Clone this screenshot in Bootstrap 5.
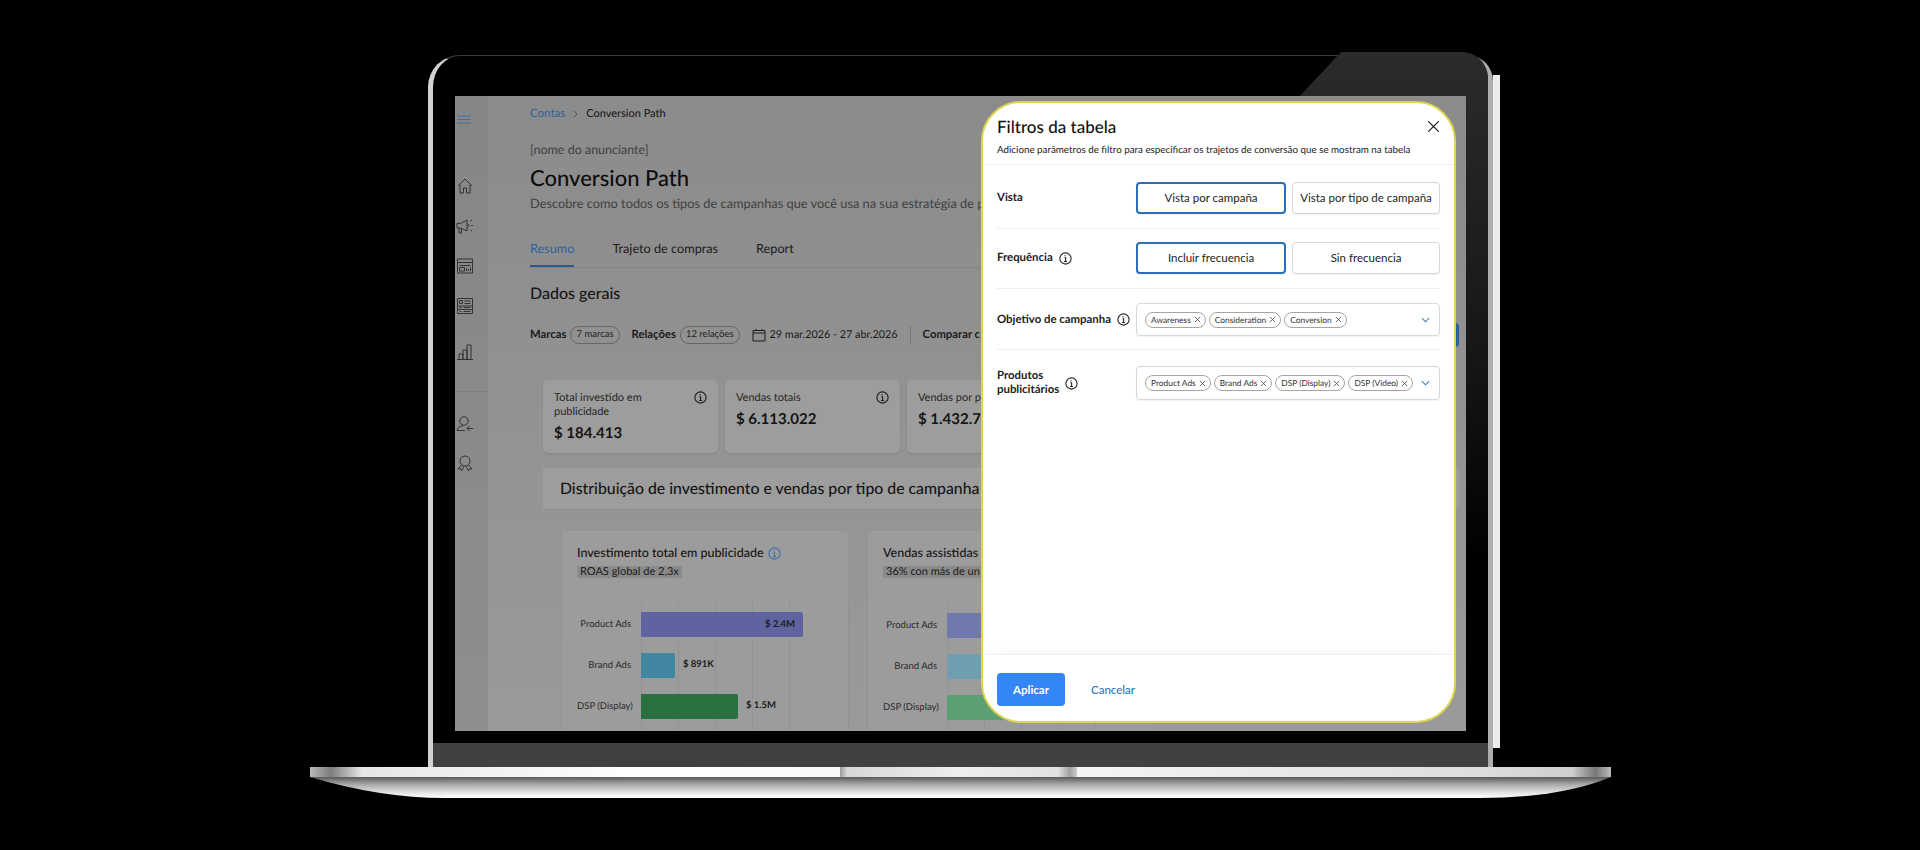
<!DOCTYPE html>
<html lang="pt">
<head>
  <meta charset="UTF-8">
  <title>Conversion Path - Filtros da tabela</title>
  <link href="https://cdn.jsdelivr.net/npm/bootstrap@5.3.0/dist/css/bootstrap.min.css" rel="stylesheet">
  <style>
    body { background: #000; color: #111; font-family: "Lato", "Liberation Sans", sans-serif; text-rendering: geometricPrecision; overflow: hidden; padding-top: 55px; }
    svg { display: block; flex-shrink: 0; fill: none; stroke: currentColor; }

    /* laptop */
    .laptop { width: 1301px; margin-left: 310px; }
    .lid { position: relative; width: 1065px; height: 712px; margin-left: 118px; padding-top: 40px; background: #000; border-top: 1px solid #3a3a3a; border-left: 5px solid #d2d2d2; border-right: 5px solid #aeaeae; border-radius: 32px 26px 0 0; }
    .lid-sheen { position: absolute; top: -4px; left: 866px; right: 0; bottom: 36px; background: linear-gradient(#2b2b2b, #161616 45%, #000 75%); clip-path: polygon(42px 0, 100% 0, 100% 100%, 0 100%, 0 45px); border-top-right-radius: 26px; }
    .lid-strip { position: absolute; top: 19px; right: -12px; bottom: 19px; width: 7px; background: #ececec; }
    .chin { height: 24px; margin-top: 12px; background: #414141; }
    .base-top { position: relative; height: 10px; background: linear-gradient(90deg, #bbb, #7c7c7c 1.6%, #e6e6e6 4%, #fff 25%, #f4f4f4 60%, #dedede 90%, #cfcfcf 97%, #777 98.8%, #bbb); }
    .base-notch { position: absolute; left: 530px; top: 0; width: 237px; height: 12px; background: linear-gradient(90deg, #999, #d8d8d8 3%, #eee 50%, #e2e2e2 92%, #a0a0a0 97%, #ccc); border-radius: 0 0 4px 4px; }
    .base-bottom { height: 21px; background: linear-gradient(#5a5a5a, #a8a8a8 35%, #e4e4e4 75%, #fff); clip-path: path("M0 0 L1301 0 Q1250 21 1170 21 L135 21 Q70 21 0 0 Z"); }

    /* tela */
    .screen { position: relative; height: 635px; margin: 0 22px; background: linear-gradient(#8b8b8b, #9a9a9a); overflow: hidden; }
    .rail { width: 33px; padding-top: 19px; background: linear-gradient(#868686, #8e8e8e); color: #333; }
    .rail-menu { color: #3a6ea8; margin-left: 2px; }
    .rail-group { margin-top: 53px; padding-left: 1px; gap: 22px; }
    .rail-chart { margin-top: 6px; }
    .rail-line { height: 1px; margin-top: 30px; background: #7f7f7f; }
    .rail-group-low { margin-top: 23px; padding-left: 1px; gap: 21px; }
    .main-area { padding: 9px 7px 0 42px; min-width: 0; }
    .main-area > * { flex-shrink: 0; }
    .crumbs { font-size: 11px; line-height: 18px; }
    .crumbs a { font-size: 11.500px; color: #2f5f9c; text-decoration: none; }
    .crumbs svg { color: #555; }
    .advertiser { margin-top: 18px; font-size: 12.5px; line-height: 18px; color: #3f3f3f; }
    .page-title { margin: 4px 0 0; font-size: 22px; line-height: 30px; font-weight: 500; color: #0d0d0d; }
    .page-desc { margin: 1px 0 0; font-size: 12.800px; line-height: 18px; color: #3f3f3f; white-space: nowrap; }
    .tabs-line { margin-top: 24px; border-bottom: 1px solid #858585; gap: 38px; }
    .tabs-line .nav-link { padding: 3px 0 8px; font-size: 12.700px; line-height: 18px; color: #1a1a1a; border-bottom: 2px solid transparent; }
    .tabs-line .nav-link.active { color: #2f5f9c; border-bottom-color: #2d5a94; }
    .block-title { margin: 15px 0 0; font-size: 16px; line-height: 22px; font-weight: 500; color: #161616; }
    .filter-bar { margin-top: 18px; height: 24px; font-size: 11.300px; color: #1a1a1a; white-space: nowrap; }
    .filter-bar b { font-weight: 700; }
    .filter-date { font-size: 10.800px; }
    .mini-pill { height: 18px; padding: 0 5px; line-height: 16px; font-size: 9.500px; font-weight: 400; color: #222; background: transparent; border: 1px solid #666; }
    .gap-after { margin-left: 12px; }
    .bar-split { width: 1px; height: 18px; margin-left: 12px; background: #777; }
    .peek-btn { width: 60px; height: 24px; background: #2b5f9e; border-radius: 4px; }
    .kpi-row { margin: 33px 0 0 13px; gap: 7px; }
    .kpi-box { width: 175px; height: 73px; flex-shrink: 0; padding: 11px; background: #9d9d9d; border: 0; border-radius: 5px; box-shadow: 0 1px 2px rgba(0,0,0,.1); font-size: 11px; line-height: 14px; color: #262626; }
    .kpi-box svg { color: #1a1a1a; }
    .kpi-value { margin-top: 4px; font-size: 15px; line-height: 20px; font-weight: 700; color: #141414; white-space: nowrap; }
    .split-head { margin: 15px 0 0 13px; height: 42px; padding-left: 17px; background: #9d9d9d; border-bottom: 1px solid #8e8e8e; font-size: 15.800px; font-weight: 500; color: #141414; white-space: nowrap; }
    .chart-row { margin: 20px 0 0 31px; gap: 18px; }
    .chart-box { flex-shrink: 0; width: 288px; height: 220px; padding: 13px 0 0 15px; background: #9c9c9c; border: 1px solid #939393; border-radius: 5px; }
    .chart-title { font-size: 12.500px; line-height: 18px; font-weight: 500; color: #141414; white-space: nowrap; }
    .chart-title svg { color: #3a6ea8; }
    .chart-tag { align-self: flex-start; margin-top: 4px; padding: 0 3px; font-size: 11px; line-height: 12px; background: #8a8a8a; color: #1a1a1a; white-space: nowrap; }
    .plot-wrap { margin-top: 23px; }
    .plot-labels { width: 54px; padding-top: 11px; gap: 16px; font-size: 9.500px; color: #2a2a2a; text-align: right; white-space: nowrap; }
    .plot-labels span { height: 25px; line-height: 25px; }
    .plot-bars { width: 149px; margin-left: 10px; padding-top: 11px; gap: 16px; height: 190px; background-image: linear-gradient(90deg, #939393 1px, transparent 1px); background-size: 37px 100%; }
    .plot-line { height: 25px; font-size: 9.500px; font-weight: 700; color: #1a1a1a; white-space: nowrap; }
    .plot-fill { flex-shrink: 0; height: 25px; padding-right: 8px; line-height: 25px; text-align: right; border-radius: 0 2px 2px 0; }
    .fill-a { background: #5f64a0; }
    .fill-b { background: #4287a2; }
    .fill-c { background: #2a7040; }
    .chart-soft .plot-wrap { margin-top: 24px; }
    .chart-soft .fill-a { background: #7079ae; }
    .chart-soft .fill-b { background: #6f9eb3; }
    .chart-soft .fill-c { background: #5c9f72; }

    /* painel de filtros */
    .filter-sheet { position: absolute; left: 526px; top: 5px; width: 475px; height: 622px; background: #fff; border: 2px solid #dcd64f; border-radius: 40px; }
    .sheet-head { padding: 12px 14px 7px; border-bottom: 1px solid #f0f0f0; }
    .sheet-title { margin: 0; font-size: 17px; line-height: 24px; font-weight: 500; color: #111; }
    .sheet-close { padding: 0; margin-top: 5px; background: none; border: 0; color: #111; }
    .sheet-sub { margin: 4px 0 0; font-size: 9.800px; line-height: 14px; color: #222; white-space: nowrap; }
    .sheet-body { padding: 4px 14px 0; }
    .filter-line { padding: 13px 0 14px; border-bottom: 1px solid #efefef; }
    .filter-line:last-child { border-bottom: 0; }
    .filter-line.field-line { padding-top: 14px; padding-bottom: 13px; }
    .filter-line.field-line:last-child { padding-top: 16px; }
    .line-label { width: 139px; flex-shrink: 0; gap: 6px; font-size: 11.400px; line-height: 14px; font-weight: 700; color: #222; white-space: nowrap; }
    .line-label svg { color: #222; }
    .choice-row { gap: 6px; }
    .choice-btn { flex: 1 1 0; height: 32px; padding: 0; font-size: 11.500px; line-height: 30px; color: #222; background: #fff; border: 1px solid #d8d8d8; border-radius: 4px; box-shadow: 0 1px 1px rgba(0,0,0,.06); white-space: nowrap; }
    .choice-btn.picked { border: 2px solid #2f6db5; line-height: 28px; }
    .tag-field { width: 304px; height: 33px; padding: 0 8px; gap: 3px; background: #fff; border: 1px solid #d8d8d8; border-radius: 4px; box-shadow: 0 1px 1px rgba(0,0,0,.06); }
    .tag-field.tall { height: 34px; }
    .tag-chip { height: 16px; padding: 0 4px 0 5px; gap: 3px; font-size: 8.400px; font-weight: 400; line-height: 14px; color: #333; background: #fff; border: 1px solid #a5a5a5; }
    .tag-chip svg { color: #444; }
    .tag-caret { margin-left: auto; margin-right: 1px; color: #3d7bb8; }
    .sheet-foot { margin-top: auto; padding: 18px 14px 15px; border-top: 1px solid #f2f2f2; box-shadow: 0 -8px 10px -8px rgba(0,0,0,.05); gap: 25px; }
    .apply-btn { width: 68px; height: 33px; padding: 0; font-size: 11.500px; font-weight: 700; color: #fff; background: #3485f7; border: 0; border-radius: 4px; }
    .cancel-btn { padding: 0; font-size: 11.500px; font-weight: 500; color: #2e74bd; text-decoration: none; }
  </style>
</head>
<body>
  <svg width="0" height="0" class="position-absolute">
    <symbol id="ic-info" viewBox="0 0 12 12">
      <circle cx="6" cy="6" r="5.2" stroke-width="1"/>
      <path d="M5 3.4h1.1M5 5.3h1.1v3.3M4.6 8.7h2.8" stroke-width="1"/>
    </symbol>
    <symbol id="ic-x" viewBox="0 0 8 8">
      <path d="M1 1l6 6M7 1L1 7" stroke-width=".9"/>
    </symbol>
    <symbol id="ic-caret" viewBox="0 0 10 6">
      <path d="M1 1l4 4 4-4" stroke-width="1.2"/>
    </symbol>
  </svg>

  <div class="laptop">
    <div class="lid">
      <div class="lid-sheen"></div>
      <div class="lid-strip"></div>

      <div class="screen d-flex">
        <aside class="rail d-flex flex-column flex-shrink-0">
          <svg class="rail-menu" width="14" height="9" viewBox="0 0 14 9"><path d="M0 1h14M0 4.5h14M0 8h14" stroke-width="1.2"/></svg>
          <div class="rail-group d-flex flex-column align-items-start">
            <svg width="18" height="18" viewBox="0 0 18 18" stroke-width="1"><path d="M2 9l7-7 7 7M4 7.5V16h3.5v-5h3v5H14V7.5"/></svg>
            <svg width="18" height="18" viewBox="0 0 18 18" stroke-width="1"><path d="M1 6.5h3.500L11 3v11L4.500 11H1zM3 11v5h2.500v-4.500M12 7a2 2 0 0 1 0 3M14.500 4l1.500-1M15 8.500h2M14.500 13l1.500 1"/></svg>
            <svg width="18" height="18" viewBox="0 0 18 18" stroke-width="1"><path d="M1.500 2h15v14h-15zM1.500 5.500h15M3.500 8.500h11M3.500 10.500h5v3.500h-5zM10.500 14v-3M12.500 14v-2M14.500 14v-3.500"/></svg>
            <svg width="18" height="18" viewBox="0 0 18 18" stroke-width="1"><path d="M1.500 1.500h15v15h-15zM1.500 9h15M1.500 12.500h15M3.500 3.500h3v3h-3zM8.500 4h6M8.500 6.500h6M3.500 10.500h2M7.500 10.500h7M3.500 14.500h2M7.500 14.500h7"/></svg>
            <svg class="rail-chart" width="18" height="18" viewBox="0 0 18 18" stroke-width="1"><path d="M1 16.500h16M3 16.500V11h4v5.500M7 16.500V7h4v9.500M11 16.500V2h4v14.500"/></svg>
          </div>
          <div class="rail-line"></div>
          <div class="rail-group-low d-flex flex-column align-items-start">
            <svg width="18" height="18" viewBox="0 0 18 18" stroke-width="1"><circle cx="8" cy="6" r="4.200"/><path d="M1 15.500c.5-3 2.500-4.500 6-4.500M9 15.500H1M17 13.500h-6M13.500 11L11 13.500l2.500 2.500"/></svg>
            <svg width="18" height="18" viewBox="0 0 18 18" stroke-width="1"><circle cx="9" cy="7" r="5"/><path d="M5.500 11L2 15l2.500-.3L5.500 17l2.500-4.700M12.500 11l3.500 4-2.500-.3-1 2.300-2.500-4.700"/></svg>
          </div>
        </aside>

        <main class="main-area flex-grow-1 d-flex flex-column">
          <div class="crumbs d-flex align-items-center gap-2">
            <a href="#">Contas</a>
            <svg width="5" height="8" viewBox="0 0 5 8"><path d="M1 1l3 3-3 3" stroke-width="1"/></svg>
            <span>Conversion Path</span>
          </div>
          <div class="advertiser">[nome do anunciante]</div>
          <h1 class="page-title">Conversion Path</h1>
          <p class="page-desc">Descobre como todos os tipos de campanhas que você usa na sua estratégia de pu</p>

          <ul class="nav tabs-line">
            <li class="nav-item"><a class="nav-link active" href="#">Resumo</a></li>
            <li class="nav-item"><a class="nav-link" href="#">Trajeto de compras</a></li>
            <li class="nav-item"><a class="nav-link" href="#">Report</a></li>
          </ul>

          <h2 class="block-title">Dados gerais</h2>

          <div class="filter-bar d-flex align-items-center">
            <b>Marcas</b>
            <span class="badge rounded-pill mini-pill ms-1">7 marcas</span>
            <b class="gap-after">Relações</b>
            <span class="badge rounded-pill mini-pill ms-1">12 relações</span>
            <svg class="gap-after" width="14" height="14" viewBox="0 0 14 14" stroke-width="1"><path d="M1 2.500h12v10.500H1zM1 5h12M4 1v2M10 1v2"/></svg>
            <span class="filter-date ms-1">29 mar.2026 - 27 abr.2026</span>
            <span class="bar-split"></span>
            <b class="gap-after">Comparar c</b>
            <span class="peek-btn ms-auto"></span>
          </div>

          <div class="kpi-row d-flex">
            <div class="card kpi-box">
              <div class="d-flex justify-content-between gap-2">
                <span>Total investido em<br>publicidade</span>
                <svg width="13" height="13"><use href="#ic-info"/></svg>
              </div>
              <div class="kpi-value">$ 184.413</div>
            </div>
            <div class="card kpi-box">
              <div class="d-flex justify-content-between gap-2">
                <span>Vendas totais</span>
                <svg width="13" height="13"><use href="#ic-info"/></svg>
              </div>
              <div class="kpi-value">$ 6.113.022</div>
            </div>
            <div class="card kpi-box">
              <div>Vendas por p</div>
              <div class="kpi-value">$ 1.432.7</div>
            </div>
          </div>

          <div class="split-head d-flex align-items-center">Distribuição de investimento e vendas por tipo de campanha</div>

          <div class="chart-row d-flex">
            <div class="card chart-box">
              <div class="chart-title d-flex align-items-center gap-1">Investimento total em publicidade <svg width="13" height="13"><use href="#ic-info"/></svg></div>
              <div class="chart-tag">ROAS global de 2,3x</div>
              <div class="plot-wrap d-flex">
                <div class="plot-labels d-flex flex-column"><span>Product Ads</span><span>Brand Ads</span><span>DSP (Display)</span></div>
                <div class="plot-bars d-flex flex-column">
                  <div class="plot-line d-flex align-items-center"><div class="plot-fill fill-a" style="width:162px">$ 2.4M</div></div>
                  <div class="plot-line d-flex align-items-center gap-2"><div class="plot-fill fill-b" style="width:34px"></div>$ 891K</div>
                  <div class="plot-line d-flex align-items-center gap-2"><div class="plot-fill fill-c" style="width:97px"></div>$ 1.5M</div>
                </div>
              </div>
            </div>
            <div class="card chart-box chart-soft">
              <div class="chart-title">Vendas assistidas</div>
              <div class="chart-tag">36% con más de un</div>
              <div class="plot-wrap d-flex">
                <div class="plot-labels d-flex flex-column"><span>Product Ads</span><span>Brand Ads</span><span>DSP (Display)</span></div>
                <div class="plot-bars d-flex flex-column">
                  <div class="plot-line d-flex align-items-center"><div class="plot-fill fill-a" style="width:120px"></div></div>
                  <div class="plot-line d-flex align-items-center"><div class="plot-fill fill-b" style="width:120px"></div></div>
                  <div class="plot-line d-flex align-items-center"><div class="plot-fill fill-c" style="width:120px"></div></div>
                </div>
              </div>
            </div>
          </div>
        </main>

        <div class="filter-sheet d-flex flex-column">
          <div class="sheet-head">
            <div class="d-flex justify-content-between align-items-start">
              <h5 class="sheet-title">Filtros da tabela</h5>
              <button class="sheet-close" type="button" aria-label="Fechar">
                <svg width="13" height="13" viewBox="0 0 8 8"><path d="M.8.8l6.400 6.400M7.200.8L.8 7.200" stroke-width=".7"/></svg>
              </button>
            </div>
            <p class="sheet-sub">Adicione parâmetros de filtro para especificar os trajetos de conversão que se mostram na tabela</p>
          </div>

          <div class="sheet-body">
            <div class="filter-line d-flex align-items-center">
              <div class="line-label d-flex align-items-center">Vista</div>
              <div class="choice-row d-flex flex-grow-1">
                <button class="btn choice-btn picked" type="button">Vista por campaña</button>
                <button class="btn choice-btn" type="button">Vista por tipo de campaña</button>
              </div>
            </div>
            <div class="filter-line d-flex align-items-center">
              <div class="line-label d-flex align-items-center">Frequência <svg width="13" height="13"><use href="#ic-info"/></svg></div>
              <div class="choice-row d-flex flex-grow-1">
                <button class="btn choice-btn picked" type="button">Incluir frecuencia</button>
                <button class="btn choice-btn" type="button">Sin frecuencia</button>
              </div>
            </div>
            <div class="filter-line field-line d-flex align-items-center">
              <div class="line-label d-flex align-items-center">Objetivo de campanha <svg width="13" height="13"><use href="#ic-info"/></svg></div>
              <div class="tag-field d-flex align-items-center">
                <span class="badge rounded-pill tag-chip d-flex align-items-center">Awareness <svg width="7" height="7"><use href="#ic-x"/></svg></span>
                <span class="badge rounded-pill tag-chip d-flex align-items-center">Consideration <svg width="7" height="7"><use href="#ic-x"/></svg></span>
                <span class="badge rounded-pill tag-chip d-flex align-items-center">Conversion <svg width="7" height="7"><use href="#ic-x"/></svg></span>
                <svg class="tag-caret" width="9" height="6"><use href="#ic-caret"/></svg>
              </div>
            </div>
            <div class="filter-line field-line d-flex align-items-center">
              <div class="line-label d-flex align-items-center"><span>Produtos<br>publicitários</span> <svg width="13" height="13"><use href="#ic-info"/></svg></div>
              <div class="tag-field tall d-flex align-items-center">
                <span class="badge rounded-pill tag-chip d-flex align-items-center">Product Ads <svg width="7" height="7"><use href="#ic-x"/></svg></span>
                <span class="badge rounded-pill tag-chip d-flex align-items-center">Brand Ads <svg width="7" height="7"><use href="#ic-x"/></svg></span>
                <span class="badge rounded-pill tag-chip d-flex align-items-center">DSP (Display) <svg width="7" height="7"><use href="#ic-x"/></svg></span>
                <span class="badge rounded-pill tag-chip d-flex align-items-center">DSP (Video) <svg width="7" height="7"><use href="#ic-x"/></svg></span>
                <svg class="tag-caret" width="9" height="6"><use href="#ic-caret"/></svg>
              </div>
            </div>
          </div>

          <div class="sheet-foot d-flex align-items-center">
            <button class="btn btn-primary apply-btn" type="button">Aplicar</button>
            <button class="btn btn-link cancel-btn" type="button">Cancelar</button>
          </div>
        </div>
      </div>

      <div class="chin"></div>
    </div>

    <div class="base-top"><div class="base-notch"></div></div>
    <div class="base-bottom"></div>
  </div>

  <script src="https://cdn.jsdelivr.net/npm/bootstrap@5.3.0/dist/js/bootstrap.bundle.min.js"></script>
</body>
</html>
